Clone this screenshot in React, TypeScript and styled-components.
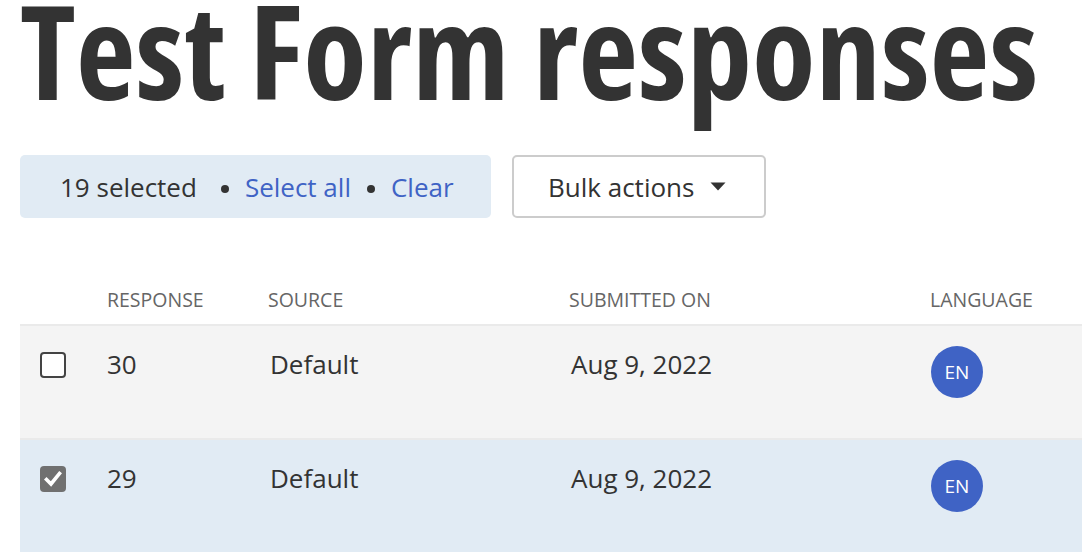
import * as React from "react";
import styled, { createGlobalStyle } from "styled-components";

const GlobalStyle = createGlobalStyle`
  html, body {
    margin: 0;
    padding: 0;
    background: #ffffff;
    font-family: "Open Sans", "Noto Sans", sans-serif;
    color: #333333;
  }
`;

interface IRow {
  id: number;
  source: string;
  submitted: string;
  language: string;
  checked: boolean;
}

const rows: IRow[] = [
  { id: 30, source: "Default", submitted: "Aug 9, 2022", language: "EN", checked: false },
  { id: 29, source: "Default", submitted: "Aug 9, 2022", language: "EN", checked: true },
];

const Page = styled.main`
  padding: 0 0 0 20px;
  overflow: hidden;
`;

const Title = styled.h1`
  margin: 0;
  font-family: "Open Sans", sans-serif;
  font-stretch: 75%;
  font-weight: 700;
  font-size: 130px;
  line-height: 100px;
  letter-spacing: 0.2px;
  color: #333333;
  white-space: nowrap;
`;

const Toolbar = styled.div`
  display: flex;
  align-items: stretch;
  gap: 21px;
  margin-top: 55px;
`;

const SelectionBar = styled.div`
  display: flex;
  align-items: center;
  width: 471px;
  height: 63px;
  box-sizing: border-box;
  padding: 0 0 0 40px;
  background: #e1ebf4;
  border-radius: 5px;
  font-size: 26px;
`;

const Dot = styled.span<{ $lead: number; $trail: number }>`
  display: inline-block;
  flex: none;
  width: 8px;
  height: 8px;
  border-radius: 50%;
  background: #333333;
  margin: 4px ${(p) => p.$trail}px 0 ${(p) => p.$lead}px;
`;

const LinkButton = styled.button`
  border: none;
  background: none;
  padding: 0;
  font: inherit;
  color: #3f63c5;
  cursor: pointer;
`;

const BulkButton = styled.button`
  display: flex;
  align-items: center;
  gap: 16px;
  width: 254px;
  height: 63px;
  box-sizing: border-box;
  padding: 0 0 0 34px;
  border: 2px solid #cccccc;
  border-radius: 5px;
  background: #ffffff;
  font-family: "Open Sans", sans-serif;
  font-size: 26px;
  color: #333333;
`;

const Table = styled.table`
  margin-top: 62px;
  width: 1062px;
  border-collapse: collapse;
  table-layout: fixed;
`;

const HeadCell = styled.th<{ $w: number }>`
  width: ${(p) => p.$w}px;
  height: 45px;
  box-sizing: border-box;
  padding: 6px 0 0 0;
  text-align: left;
  vertical-align: top;
  font-weight: 400;
  font-size: 19.5px;
  color: #666666;
  text-transform: uppercase;
  border-bottom: 2px solid #eaeaea;
`;

const BodyRow = styled.tr<{ $selected: boolean }>`
  background: ${(p) => (p.$selected ? "#e1ebf4" : "#f4f4f4")};
  border-bottom: 2px solid #eaeaea;
`;

const Cell = styled.td<{ $indent?: number }>`
  height: 114px;
  padding: 21px 0 0 ${(p) => p.$indent ?? 0}px;
  box-sizing: border-box;
  vertical-align: top;
  font-size: 26px;
  line-height: 35px;
  color: #333333;
`;

const CheckCell = styled(Cell)`
  padding-left: 20px;
  padding-top: 26px;
`;

const Box = styled.span<{ $checked: boolean }>`
  display: flex;
  align-items: center;
  justify-content: center;
  width: 26px;
  height: 26px;
  box-sizing: border-box;
  border-radius: 4px;
  border: ${(p) => (p.$checked ? "none" : "2px solid #444444")};
  background: ${(p) => (p.$checked ? "#707070" : "#ffffff")};
`;

const BadgeCell = styled(Cell)`
  padding-top: 20px;
`;

const Badge = styled.span`
  display: flex;
  align-items: center;
  justify-content: center;
  width: 52px;
  height: 52px;
  margin-left: 1px;
  border-radius: 50%;
  background: #3f63c5;
  color: #ffffff;
  font-size: 19px;
  line-height: 1;
`;

const Caret = () => (
  <svg width="16" height="9" viewBox="0 0 16 9">
    <path d="M0.5 0.5 L15.5 0.5 L8 8.5 Z" fill="#333333" />
  </svg>
);

const Tick = () => (
  <svg width="18" height="16" viewBox="0 0 18 16">
    <path d="M2.5 8.5 L7 13 L15.5 2.5" fill="none" stroke="#ffffff" strokeWidth="3.6" strokeLinecap="square" />
  </svg>
);

export default function App() {
  return (
    <Page>
      <GlobalStyle />
      <Title>Test Form responses</Title>

      <Toolbar>
        <SelectionBar>
          <span>19 selected</span>
          <Dot $lead={24} $trail={16} />
          <LinkButton>Select all</LinkButton>
          <Dot $lead={16} $trail={16} />
          <LinkButton>Clear</LinkButton>
        </SelectionBar>
        <BulkButton>
          Bulk actions
          <Caret />
        </BulkButton>
      </Toolbar>

      <Table>
        <thead>
          <tr>
            <HeadCell $w={87} />
            <HeadCell $w={161}>Response</HeadCell>
            <HeadCell $w={301}>Source</HeadCell>
            <HeadCell $w={361}>Submitted on</HeadCell>
            <HeadCell $w={152}>Language</HeadCell>
          </tr>
        </thead>
        <tbody>
          {rows.map((row) => (
            <BodyRow key={row.id} $selected={row.checked}>
              <CheckCell>
                <Box $checked={row.checked}>{row.checked && <Tick />}</Box>
              </CheckCell>
              <Cell>{row.id}</Cell>
              <Cell $indent={2}>{row.source}</Cell>
              <Cell $indent={2}>{row.submitted}</Cell>
              <BadgeCell>
                <Badge>{row.language}</Badge>
              </BadgeCell>
            </BodyRow>
          ))}
        </tbody>
      </Table>
    </Page>
  );
}
